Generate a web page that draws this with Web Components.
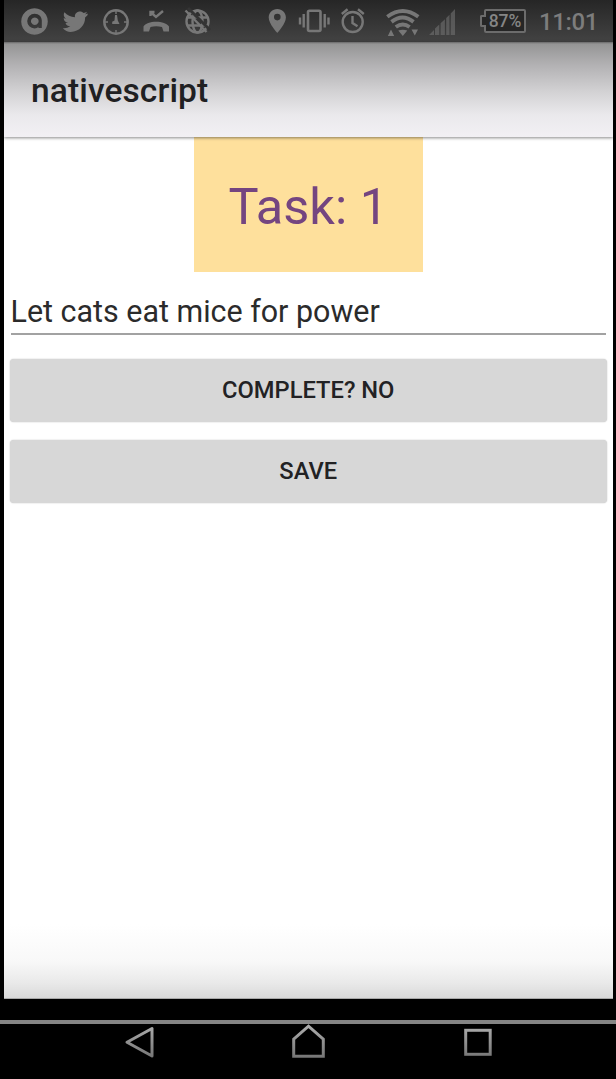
<!DOCTYPE html>
<html lang="en"><head><meta charset="utf-8"><title>nativescript</title>
<style>html,body{margin:0;background:#000}body{font-family:Roboto,sans-serif;overflow:hidden}</style></head>
<body><phone-screen></phone-screen>
<script>
const define = (name, html) => customElements.define(name, class extends HTMLElement {
  constructor() {
    super();
    const t = document.createElement('template');
    t.innerHTML = html;
    this.attachShadow({mode: 'open'}).append(t.content.cloneNode(true));
  }
});

define('status-bar', `<style>
:host{display:flex;height:42px;background:linear-gradient(#262626,#434343);color:#777;overflow:hidden}
svg{display:block;flex:none;height:42px;fill:currentColor;stroke:none}
.l{fill:none;stroke:currentColor;stroke-width:2.4}
.battery{flex:none;box-sizing:border-box;width:42px;height:24px;margin:9px 0 0 4px;padding-top:1px;border:2px solid #6c6c6c;border-radius:2px;background:#262626;font:500 17.500px/19px Roboto,sans-serif;letter-spacing:-.1px;text-align:center;white-space:nowrap;position:relative;color:#858585}
.battery::before{content:"";position:absolute;left:-6px;top:4px;width:4px;height:8px;border:2px solid #6c6c6c;border-right:0;border-radius:2px 0 0 2px;background:#262626}
.time{margin-left:13px;font:500 24px/45px Roboto,sans-serif;letter-spacing:-.4px;color:#7d7d7d;white-space:nowrap}
</style>
<svg width="52" viewBox="4 0 52 42"><path fill-rule="evenodd" d="M34.500 8.200a13.300 13.300 0 1 0 .01 0zM34.500 13.800c4.600 0 7.300 3 7.300 7v7.100h-3.400v-1.200c-1 1.100-2.100 1.700-3.900 1.700a7.300 7.300 0 0 1 0-14.600zM34.800 17.400a3.800 3.800 0 1 0 .01 0z"/></svg>
<svg width="40" viewBox="56 0 40 42"><path transform="translate(60.900 9.700) scale(1.190 1.120)" d="M22.460 3.500c-.77.35-1.600.58-2.460.69.88-.53 1.560-1.370 1.880-2.380-.83.5-1.750.85-2.720 1.050C18.370 2 17.260 1.500 16 1.500c-2.350 0-4.270 1.920-4.270 4.290 0 .34.040.67.110.98C8.280 6.590 5.110 4.880 3 2.290c-.37.63-.58 1.370-.58 2.150 0 1.490.75 2.810 1.910 3.560-.71 0-1.370-.2-1.950-.5v.03c0 2.080 1.480 3.820 3.440 4.210a4.220 4.220 0 0 1-1.930.07 4.280 4.280 0 0 0 4 2.980 8.521 8.521 0 0 1-5.330 1.840c-.34 0-.68-.02-1.020-.06C3.440 18.700 5.700 19.800 8.120 19.800 16 19.800 20.330 13.260 20.330 7.460c0-.19 0-.37-.01-.56.84-.6 1.560-1.360 2.140-2.230z"/></svg>
<svg width="40" viewBox="96 0 40 42"><circle class="l" cx="116" cy="22" r="11.700"/><path d="M115 15h2l.8 5.500 1.700 3.500h-7.300v-2.200l2.300-1.300zM115.300 11h1.400v3h-1.400zM115.300 30h1.400v3h-1.400zM105 21.300h3v1.400h-3zM124 21.300h3v1.400h-3z"/></svg>
<svg width="40" viewBox="136 0 40 42"><path class="l" stroke-width="2" d="M150.500 12l5.500 5 7-6M150.500 16v-4h4"/><path d="M143.500 31.500v-5c3-6.500 22-6.500 25.500 0v5h-5.500l-1.500-4.500q-6-1.500-11.500 0l-1.500 4.500z"/></svg>
<svg width="86" viewBox="176 0 86 42"><g class="l"><circle cx="197.500" cy="21.500" r="11"/><ellipse cx="197.500" cy="21.500" rx="5" ry="11"/><path d="M187.500 17.500h20M187.500 25.500h20"/></g><path stroke="#343434" stroke-width="3" d="M188 8l22 22"/><path class="l" d="M185.500 10.500l21 21.500"/></svg>
<svg width="32" viewBox="262 0 32 42"><path fill-rule="evenodd" d="M277.300 9c-5 0-8.600 3.700-8.600 8.500 0 6.300 8.600 15.500 8.600 15.500s8.600-9.200 8.600-15.500c0-4.800-3.700-8.500-8.600-8.500zm0 4.800a3.300 3.300 0 1 1 0 6.600 3.300 3.300 0 0 1 0-6.600z"/></svg>
<svg width="42" viewBox="294 0 42 42"><rect x="308" y="10.700" width="12.500" height="20.300" rx="1.500" fill="none" stroke="currentColor" stroke-width="2.600"/><path d="M302.500 14h2.400v13.500h-2.400zM298.800 17.500h2.400v7h-2.400zM323.500 14h2.400v13.500h-2.400zM327.300 17.500h2.400v7h-2.400z"/></svg>
<svg width="41" viewBox="336 0 41 42"><circle class="l" cx="352.700" cy="22" r="10"/><path class="l" d="M341.800 14l5.800-4.700M358 9.300l5.800 4.700M352.500 16v7l5 3.300"/></svg>
<svg width="48" viewBox="377 0 48 42"><g fill="none" stroke="currentColor" stroke-width="3.900"><path d="M387.300 16.800q15.500-11.600 31 0"/><path d="M391.500 21.900q11-8.600 22 0"/><path d="M395.800 27q7-5 13.800 0"/></g><path d="M398.300 30.600q4.500-1.500 9 0l-4.500 5.500zM387.800 36l3.200-6.500 3.200 6.500zM411.500 29.500h6.500l-3.200 6z"/></svg>
<svg width="55" viewBox="425 0 55 42"><g opacity=".55"><path d="M429 35l5-5v5zM435 28.500l4.300-4V35H435zM440.600 23.200l4.300-4V35h-4.300zM446.200 18l3.300-3.300V35h-3.300zM450.700 13.500l4.300-4.500V35h-4.300z"/></g></svg>
<div class="battery">87%</div><div class="time">11:01</div>`);

define('app-bar', `<style>
:host{display:block;height:95px;box-sizing:border-box;padding-left:27px;background:linear-gradient(#686868 0,#959595 2px,#b1b0b2 22px,#d3d2d4 50px,#eae9ec 73px,#f2f0f4 95px);box-shadow:0 1px 3px #0007;position:relative;z-index:1;color:#202022;font-size:33.500px;letter-spacing:.12px;font-weight:500;line-height:98px;white-space:nowrap}
</style><slot></slot>`);

define('task-badge', `<style>
:host{display:block;width:228.500px;height:134.500px;margin:0 0 0 190px;background:#fee09c;color:#744580;font-size:50.500px;line-height:140px;text-align:center;white-space:nowrap}
</style><slot></slot>`);

define('text-field', `<style>
:host{display:block;height:42px;margin:19.500px 7px 0 6.500px;border-bottom:2px solid #a2a2a2;color:#2b2b2b;font-size:30.450px;line-height:42px;white-space:nowrap}
span{display:block}
</style><span><slot></slot></span>`);

define('raised-button', `<style>
:host{display:block;margin:0 6.500px 18.500px 6px}
button{display:block;width:100%;height:62.500px;border:0;border-radius:4px;padding:0;background:#d7d7d7;box-shadow:0 0 1.500px #0004;color:#222224;font:500 23.700px/62px Roboto,sans-serif;text-align:center}
</style><button><slot></slot></button>`);

define('nav-bar', `<style>
:host{display:block;height:59px;box-sizing:border-box;border-top:4px solid #858585}
svg{display:block}
</style><svg width="616" height="55" viewBox="0 1024 616 55" fill="none" stroke="url(#g)" stroke-width="3"><defs><linearGradient id="g" gradientUnits="userSpaceOnUse" x1="0" y1="1025" x2="0" y2="1058"><stop stop-color="#adadad"/><stop offset="1" stop-color="#757575"/></linearGradient></defs><path stroke-linejoin="round" d="M152 1028.500v27.500l-25-13.800z"/><path d="M293.700 1056.200v-17l14.800-13 14.800 13v17z"/><rect x="465.700" y="1030.300" width="24.500" height="24"/></svg>`);

define('phone-screen', `<style>
:host{display:flex;flex-direction:column;width:616px;height:1079px;background:#000}
main{height:999px;margin:0 3px 0 4px;background:linear-gradient(#fff 0,#fff 924px,#f8f8f8 962px,#e9e9e9 983px,#d9d9d9 998px,#777 999px)}
text-field{margin-bottom:24px}
nav-bar{margin-top:21px}
</style><main><status-bar></status-bar><app-bar>nativescript</app-bar><task-badge>Task: 1</task-badge><text-field>Let cats eat mice for power</text-field><raised-button>COMPLETE? NO</raised-button><raised-button>SAVE</raised-button></main><nav-bar></nav-bar>`);
</script></body></html>
